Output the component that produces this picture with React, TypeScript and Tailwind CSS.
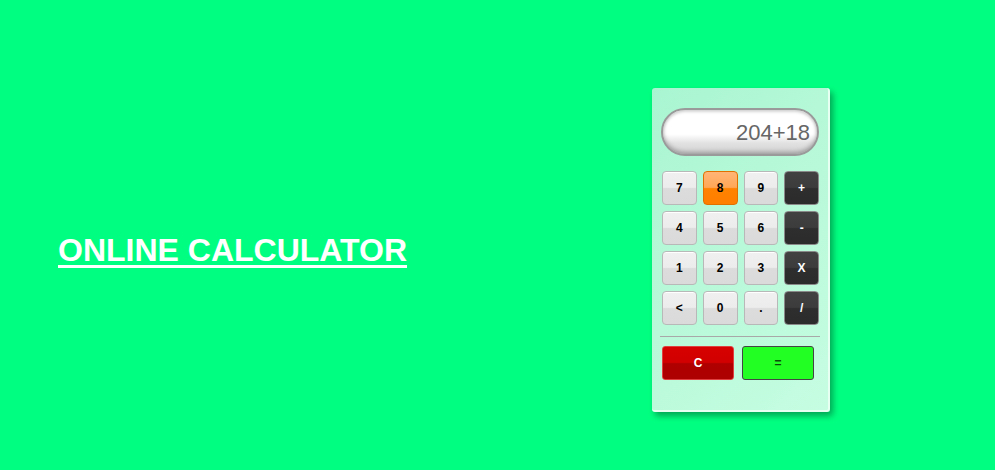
import React from 'react';

const numBtn =
  'w-[35px] h-[34px] rounded-[4px] border border-[#b8b8b8] bg-[linear-gradient(#f0f0f0_0%,#ececec_48%,#dcdcdc_52%,#dadada_100%)] shadow-[inset_0_1px_0_#fff] text-[12px] font-bold text-black flex items-center justify-center';
const opBtn =
  'w-[35px] h-[34px] rounded-[4px] border border-[#8a8a8a] bg-[linear-gradient(#414141_0%,#3c3c3c_48%,#2e2e2e_52%,#2b2b2b_100%)] text-[12px] font-bold text-white flex items-center justify-center';
const hotBtn =
  'w-[35px] h-[34px] rounded-[4px] border border-[#e07000] bg-[linear-gradient(#ffb576_0%,#ffa757_48%,#ff8200_52%,#ff7f00_100%)] text-[12px] font-bold text-black flex items-center justify-center';

export default function App() {
  const rows = [
    ['7', '8', '9', '+'],
    ['4', '5', '6', '-'],
    ['1', '2', '3', 'X'],
    ['<', '0', '.', '/'],
  ];

  return (
    <div className="w-[995px] h-[470px] bg-[#00ff80] flex items-start font-['Liberation_Sans',Arial,sans-serif]">
      <div className="w-[652px] h-full flex items-center pl-[58px] pt-[30px]">
        <h1 className="text-[32px] font-bold text-white underline decoration-[3px] underline-offset-[4px] leading-none">
          ONLINE CALCULATOR
        </h1>
      </div>

      <div className="mt-[88px] w-[178px] h-[324px] rounded-[3px] bg-[linear-gradient(135deg,#a9f5d2_0%,#b8f9d9_50%,#c6fde2_100%)] border-r-2 border-b-2 border-[#e6fff2] shadow-[3px_4px_6px_rgba(0,0,0,0.35)] px-[9px] pt-[20px]">
        <div className="h-[48px] rounded-full border-2 border-[#9a9a9a] bg-[linear-gradient(#ffffff_0%,#ffffff_55%,#e2e2e2_75%,#d0d0d0_100%)] shadow-[inset_0_-2px_4px_rgba(0,0,0,0.25),inset_0_2px_3px_rgba(0,0,0,0.15)] flex items-center justify-end pr-[7px] text-[22px] text-[#666]">
          204+18
        </div>

        <div className="mt-[15px] flex flex-col gap-[6px] pl-px">
          {rows.map((row, i) => (
            <div key={i} className="flex gap-[6px]">
              {row.map((k, j) => (
                <div
                  key={k}
                  className={j === 3 ? opBtn : k === '8' ? hotBtn : numBtn}
                >
                  {k}
                </div>
              ))}
            </div>
          ))}
        </div>

        <div className="mt-[11px] h-px bg-[#a8a8a8] mx-[-1px]" />

        <div className="mt-[9px] flex gap-[8px] pl-px">
          <div className="w-[72px] h-[34px] rounded-[3px] border border-[#e04040] bg-[linear-gradient(#d60000_0%,#d20000_48%,#b00000_52%,#ad0000_100%)] text-[12px] font-bold text-white flex items-center justify-center">
            C
          </div>
          <div className="w-[72px] h-[34px] rounded-[3px] border border-[#444] bg-[#22ff22] text-[12px] font-bold text-[#0a4a0a] flex items-center justify-center">
            =
          </div>
        </div>
      </div>
    </div>
  );
}
